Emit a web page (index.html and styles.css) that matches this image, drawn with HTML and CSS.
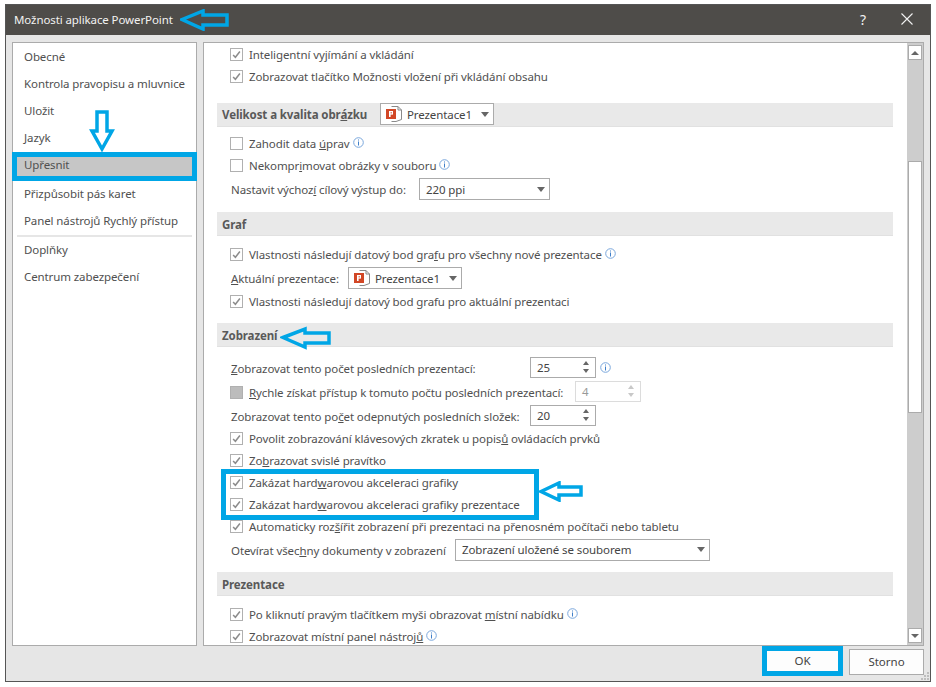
FILE: index.html
```html
<html>
  <head>
    <title>Možnosti aplikace PowerPoint</title>
    <link rel="stylesheet" href="styles.css">
  </head>

  <body>
    <svg class="defs" width="0" height="0">
      <symbol id="tick" viewBox="0 0 13 13">
        <path d="M2.500 7 L5.200 9.800 L10.500 3" fill="none" stroke="#8c8c8c" stroke-width="1.800"/>
      </symbol>
      <symbol id="info" viewBox="0 0 11 11">
        <circle cx="5.500" cy="5.500" r="4.800" fill="none" stroke="#7aa7dc" stroke-width="1"/>
        <rect x="5" y="2.500" width="1" height="1" fill="#3f7fc9"/>
        <rect x="5" y="4.500" width="1" height="4" fill="#3f7fc9"/>
      </symbol>
      <symbol id="pptdoc" viewBox="0 0 18 18">
        <path d="M6.500 1.500 H13 L16.500 5 V14.500 L11 16.500 H6.500" fill="#fff" stroke="#8a8a8a"/>
        <path d="M13 1.500 V5 H16.500" fill="none" stroke="#8a8a8a"/>
        <rect x="1" y="4" width="10" height="10" fill="#d24726"/>
        <rect x="4" y="6" width="1.600" height="6" fill="#fff"/>
        <rect x="4" y="6" width="4" height="3.600" fill="#fff"/>
        <rect x="5.600" y="7.200" width="1.200" height="1.200" fill="#d24726"/>
      </symbol>
    </svg>

    <div class="window">
      <div class="titlebar">
        <span class="title">Možnosti aplikace PowerPoint</span>
        <span class="help">?</span>
        <svg class="close" width="14" height="14" viewBox="0 0 14 14">
          <path d="M1.500 1.500 L12.500 12.500 M12.500 1.500 L1.500 12.500" stroke="#f2f2f2" stroke-width="1.100" fill="none"/>
        </svg>
      </div>

      <div class="main">
        <ul class="nav">
          <li>Obecné</li>
          <li>Kontrola pravopisu a mluvnice</li>
          <li>Uložit</li>
          <li>Jazyk</li>
          <li class="active">Upřesnit</li>
          <li>Přizpůsobit pás karet</li>
          <li>Panel nástrojů Rychlý přístup</li>
          <li class="sep"></li>
          <li>Doplňky</li>
          <li>Centrum zabezpečení</li>
        </ul>

        <div class="panel">
          <div class="content">
            <div class="row"><span class="check"><svg><use href="#tick"/></svg></span><span>Inteligentní vyjímání a vkládání</span></div>
            <div class="row"><span class="check"><svg><use href="#tick"/></svg></span><span>Zobrazovat tlačítko Možnosti vložení při vkládání obsahu</span></div>

            <div class="head first">
              <span class="head-label">Velikost a kvalita obr<u>á</u>zku</span>
              <div class="select doc w114"><svg class="ppt"><use href="#pptdoc"/></svg><span>Prezentace1</span><i class="caret"></i></div>
            </div>
            <div class="group g5">
              <div class="row"><span class="check"></span><span>Zahodit data <u>ú</u>prav</span><svg class="info"><use href="#info"/></svg></div>
              <div class="row"><span class="check"></span><span>Nekompr<u>i</u>movat obrázky v souboru</span><svg class="info"><use href="#info"/></svg></div>
              <div class="row plain mt2"><span class="w178">Nastavit výchoz<u>í</u> cílový výstup do:</span>
                <div class="select w131 ml10"><span>220 ppi</span><i class="caret"></i></div>
              </div>
            </div>

            <div class="head">Graf</div>
            <div class="group g7">
              <div class="row"><span class="check"><svg><use href="#tick"/></svg></span><span>Vlastnosti následují datový bod gra<u>f</u>u pro všechny nové prezentace</span><svg class="info"><use href="#info"/></svg></div>
              <div class="row plain mt2"><span class="w107"><u>A</u>ktuální prezentace:</span>
                <div class="select doc w114 ml10"><svg class="ppt"><use href="#pptdoc"/></svg><span>Prezentace1</span><i class="caret"></i></div>
              </div>
              <div class="row mt1"><span class="check"><svg><use href="#tick"/></svg></span><span>Vlastnosti následují datový bod grafu pro aktuální prezentaci</span></div>
            </div>

            <div class="head near">Zobrazení</div>
            <div class="group g10">
              <div class="row plain"><span class="w299"><u>Z</u>obrazovat tento počet posledních prezentací:</span>
                <div class="spin"><span>25</span><i class="arrows"></i></div><svg class="info wide"><use href="#info"/></svg>
              </div>
              <div class="row mt2"><span class="check solid"></span><span class="w326"><u>R</u>ychle získat přístup k tomuto počtu posledních prezentací:</span>
                <div class="spin off"><span>4</span><i class="arrows"></i></div>
              </div>
              <div class="row plain mt2"><span class="w299">Zobrazovat tento po<u>č</u>et odepnutých posledních složek:</span>
                <div class="spin"><span>20</span><i class="arrows"></i></div>
              </div>
              <div class="row"><span class="check"><svg><use href="#tick"/></svg></span><span>Povolit zobrazování klávesových zkratek u popis<u>ů</u> ovládacích prvků</span></div>
              <div class="row"><span class="check"><svg><use href="#tick"/></svg></span><span>Zo<u>b</u>razovat svislé pravítko</span></div>
              <div class="row"><span class="check"><svg><use href="#tick"/></svg></span><span>Zakázat hard<u>w</u>arovou akceleraci grafiky</span></div>
              <div class="row"><span class="check"><svg><use href="#tick"/></svg></span><span>Zakázat hard<u>w</u>arovou akceleraci grafiky prezentace</span></div>
              <div class="row"><span class="check"><svg><use href="#tick"/></svg></span><span>Automaticky roz<u>š</u>ířit zobrazení při prezentaci na přenosném počítači nebo tabletu</span></div>
              <div class="row plain mt2"><span class="w214">Otevírat všec<u>h</u>ny dokumenty v zobrazení</span>
                <div class="select w255 ml10 lift"><span>Zobrazení uložené se souborem</span><i class="caret"></i></div>
              </div>
            </div>

            <div class="head near">Prezentace</div>
            <div class="group g7">
              <div class="row"><span class="check"><svg><use href="#tick"/></svg></span><span>Po kliknutí pravým tlačítkem myši obrazovat <u>m</u>ístní nabídku</span><svg class="info"><use href="#info"/></svg></div>
              <div class="row"><span class="check"><svg><use href="#tick"/></svg></span><span>Zobrazovat místní panel nástroj<u>ů</u></span><svg class="info"><use href="#info"/></svg></div>
            </div>
          </div>

          <div class="scrollbar">
            <div class="sb-btn"><i class="up"></i></div>
            <div class="thumb"></div>
            <div class="sb-btn bottom"><i class="down"></i></div>
          </div>
        </div>
      </div>

      <div class="footer">
        <button class="ok">OK</button>
        <button class="cancel">Storno</button>
      </div>
      <svg class="grip" width="9" height="9" viewBox="0 0 9 9">
        <path d="M6 0h2v2H6z M3 3h2v2H3z M6 3h2v2H6z M0 6h2v2H0z M3 6h2v2H3z M6 6h2v2H6z" fill="#bdbdbd"/>
      </svg>

      <!-- annotations drawn over the screenshot -->
      <div class="mark-box"></div>
      <svg class="arrow a-title" width="50" height="22" viewBox="0 0 50 22">
        <path d="M2 10.500 L23 2 V6 H47 V16 H23 V20 Z" fill="none" stroke="#00a6e6" stroke-width="3.500"/>
      </svg>
      <svg class="arrow a-down" width="26" height="44" viewBox="0 0 26 44">
        <path d="M8 2 H18 V21 H23 L13 39 L3 21 H8 Z" fill="none" stroke="#00a6e6" stroke-width="3.500"/>
      </svg>
      <svg class="arrow a-zobr" width="52" height="24" viewBox="0 0 52 24">
        <path d="M3 11.500 L25 3 V7 H49 V17 H25 V21 Z" fill="none" stroke="#00a6e6" stroke-width="3.500"/>
      </svg>
      <svg class="arrow a-hw" width="46" height="21" viewBox="0 0 46 21">
        <path d="M3 10.500 L21 2 V6 H43 V14 H21 V19 Z" fill="none" stroke="#00a6e6" stroke-width="3.500"/>
      </svg>
    </div>
  </body>
</html>
```

FILE: styles.css
```css
body {
  margin: 0;
  background: #fff;
  font-family: "Noto Sans", sans-serif;
  font-size: 11.5px;
  letter-spacing: -0.1px;
  color: #505050;
}

.defs {
  position: absolute;
}

.window {
  position: relative;
  width: 926px;
  height: 678px;
  margin: 4px 0 0 5px;
  box-sizing: border-box;
  border: 1px solid #555;
  background: #e6e6e6;
}

.titlebar {
  display: flex;
  align-items: center;
  height: 30px;
  box-sizing: border-box;
  background: #4e4c49;
  color: #f2f2f2;
  padding: 0 16px 2px 8px;
}

.title {
  flex: 1;
}

.help {
  font-size: 14px;
  margin-right: 34px;
}

.main {
  display: flex;
  gap: 6px;
  padding: 7px 6px 0 6px;
}

.nav {
  list-style: none;
  margin: 0;
  padding: 1px 0 0 0;
  width: 185px;
  height: 604px;
  box-sizing: border-box;
  border: 1px solid #ababab;
  background: #fff;
}

.nav li {
  height: 27px;
  line-height: 25px;
  padding-left: 11px;
}

.nav li.active {
  box-sizing: border-box;
  height: 29px;
  line-height: 16px;
  margin: 0 -1px;
  border: 5px solid #00a6e6;
  padding-left: 7px;
  background: #c6c6c6;
}

.nav li.sep {
  height: 2px;
  margin: 0 4px;
  padding: 0;
  background: #e6e6e6;
}

.panel {
  flex: 1;
  display: flex;
  height: 604px;
  box-sizing: border-box;
  border: 1px solid #ababab;
  background: #fff;
}

.content {
  flex: 1;
  overflow: hidden;
  padding: 0 14px 0 13px;
}

.row {
  display: flex;
  align-items: center;
  height: 22px;
  padding-left: 13px;
  white-space: nowrap;
}

.row.plain {
  padding-left: 14px;
}

.mt1 {
  margin-top: 1px;
}

.mt2 {
  margin-top: 2px;
}

.ml10 {
  margin-left: 10px;
}

.lift {
  height: 21px;
  margin-top: -1px;
}

.check {
  flex: none;
  width: 13px;
  height: 13px;
  margin-right: 6px;
  box-sizing: border-box;
  border: 1px solid #b0b0b0;
  background: #fff;
}

.check svg {
  display: block;
  width: 11px;
  height: 11px;
}

.check.solid {
  background: #bcbcbc;
}

.info {
  flex: none;
  width: 11px;
  height: 11px;
  margin: 0 0 2px 3px;
}

.info.wide {
  margin-left: 4px;
}

.head {
  display: flex;
  align-items: center;
  height: 24px;
  box-sizing: border-box;
  margin-top: 12px;
  padding: 1px 0 0 5px;
  background: #e9e9e9;
  border-bottom: 1px solid #e1e1e1;
  font-weight: 700;
  color: #595959;
}

.head.first {
  margin-top: 16px;
  padding: 0 0 1px 5px;
}

.head.near {
  margin-top: 11px;
}

.head-label {
  width: 158px;
}

.group.g5 {
  padding-top: 5px;
}

.group.g7 {
  padding-top: 7px;
}

.group.g10 {
  padding-top: 10px;
}

.select {
  display: flex;
  align-items: center;
  height: 22px;
  box-sizing: border-box;
  border: 1px solid #ababab;
  background: #fff;
  padding: 0 4px 0 6px;
  font-weight: 400;
  color: #444;
}

.select.doc {
  padding-left: 4px;
}

.select span {
  flex: 1;
}

.w107 {
  width: 107px;
}

.w114 {
  width: 114px;
}

.w131 {
  width: 131px;
}

.w178 {
  width: 178px;
}

.w214 {
  width: 214px;
}

.w255 {
  width: 255px;
}

.ppt {
  width: 18px;
  height: 18px;
  margin-right: 4px;
}

.caret {
  width: 0;
  height: 0;
  border-left: 4px solid transparent;
  border-right: 4px solid transparent;
  border-top: 5px solid #666;
}

.w299 {
  width: 299px;
}

.w326 {
  width: 326px;
}

.spin {
  display: flex;
  align-items: center;
  flex: none;
  width: 66px;
  height: 21px;
  margin-top: -2px;
  box-sizing: border-box;
  border: 1px solid #ababab;
  background: #fff;
  padding: 0 6px;
  color: #444;
}

.spin span {
  flex: 1;
}

.spin.off {
  border-color: #dcdcdc;
  color: #999;
}

.arrows {
  width: 0;
  height: 0;
  border-left: 3px solid transparent;
  border-right: 3px solid transparent;
  border-bottom: 4px solid #666;
  position: relative;
  top: -4px;
}

.arrows::after {
  content: "";
  position: absolute;
  left: -3px;
  top: 8px;
  border-left: 3px solid transparent;
  border-right: 3px solid transparent;
  border-top: 4px solid #666;
}

.spin.off .arrows {
  border-bottom-color: #c8c8c8;
}

.spin.off .arrows::after {
  border-top-color: #c8c8c8;
}

.scrollbar {
  flex: none;
  display: flex;
  flex-direction: column;
  width: 16px;
  box-sizing: border-box;
  padding: 2px 1px;
  background: #cdcdcd;
}

.sb-btn {
  display: flex;
  align-items: center;
  justify-content: center;
  height: 15px;
  box-sizing: border-box;
  border: 1px solid #ababab;
  background: #fff;
}

.sb-btn.bottom {
  margin-top: auto;
}

.up {
  border-left: 4px solid transparent;
  border-right: 4px solid transparent;
  border-bottom: 4px solid #666;
}

.down {
  border-left: 4px solid transparent;
  border-right: 4px solid transparent;
  border-top: 4px solid #666;
}

.thumb {
  height: 252px;
  margin-top: 101px;
  box-sizing: border-box;
  border: 1px solid #ababab;
  background: #fff;
}

.footer {
  display: flex;
  justify-content: flex-end;
  gap: 6px;
  padding-right: 6px;
}

button {
  font-family: "Noto Sans", sans-serif;
  font-size: 11.5px;
  color: #444;
  background: #fdfdfd;
  padding: 0 0 2px 0;
}

.ok {
  width: 81px;
  height: 30px;
  border: 5px solid #00a6e6;
}

.cancel {
  width: 75px;
  height: 26px;
  margin-top: 3px;
  border: 1px solid #ababab;
}

.grip {
  position: absolute;
  right: 0;
  bottom: 0;
}

.mark-box {
  position: absolute;
  left: 215px;
  top: 464px;
  width: 318px;
  height: 51px;
  box-sizing: border-box;
  border: 5px solid #00a6e6;
}

.arrow {
  position: absolute;
}

.a-title {
  left: 174px;
  top: 4px;
}

.a-down {
  left: 83px;
  top: 105px;
}

.a-zobr {
  left: 274px;
  top: 321px;
}

.a-hw {
  left: 532px;
  top: 476px;
}
```
